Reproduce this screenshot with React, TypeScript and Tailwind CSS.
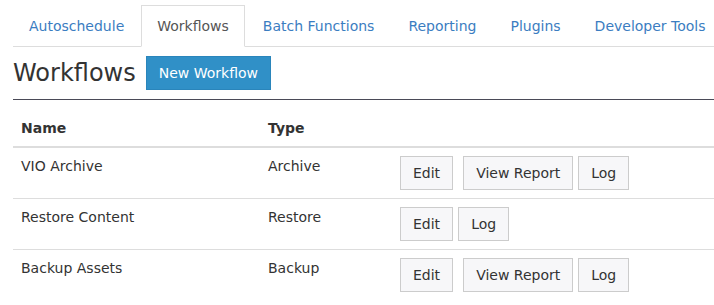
import React from "react";

type Workflow = {
  name: string;
  type: string;
  report: boolean;
};

const tabs = ["Autoschedule", "Workflows", "Batch Functions", "Reporting", "Plugins", "Developer Tools"];

const workflows: Workflow[] = [
  { name: "VIO Archive", type: "Archive", report: true },
  { name: "Restore Content", type: "Restore", report: false },
  { name: "Backup Assets", type: "Backup", report: true },
];

const btn =
  "border border-[#ccc] bg-[#f7f7f9] px-[12px] py-[6px] text-[14px] leading-[20px] text-[#333]";

export default function App() {
  return (
    <div
      className="min-h-[305px] w-[714px] overflow-hidden bg-white pl-[13px] pt-[5px] text-[14px] leading-[20px] text-[#333]"
      style={{ fontFamily: '"DejaVu Sans", Verdana, sans-serif' }}
    >
      <ul className="flex w-[720px] border-b border-[#ddd]">
        {tabs.map((t, i) => {
          const active = t === "Workflows";
          return (
            <li key={t} className={`-mb-px whitespace-nowrap ${i === 0 ? "mr-[1px]" : "mr-[2px]"}`}>
              <a
                className={`block border px-[15px] py-[10px] ${
                  active
                    ? "border-[#ddd] border-b-white bg-white text-[#555]"
                    : "border-transparent text-[#3b7dc1]"
                }`}
              >
                {t}
              </a>
            </li>
          );
        })}
      </ul>

      <div className="flex items-center border-b border-[#4a4a57] pb-[9px] pt-[9px]">
        <h2 className="text-[24px] leading-[34px] text-[#333]">Workflows</h2>
        <button className="ml-[10px] border border-[#2a85bb] bg-[#3090c7] px-[12px] py-[6px] text-[14px] leading-[20px] text-white">
          New Workflow
        </button>
      </div>

      <table className="mt-[10px] w-[720px] border-collapse text-left">
        <thead>
          <tr className="border-b-2 border-[#ddd]">
            <th className="w-[247px] px-[8px] py-[8px] align-bottom font-bold">Name</th>
            <th className="w-[132px] px-[8px] py-[8px] align-bottom font-bold">Type</th>
            <th className="px-[8px] py-[8px]"></th>
          </tr>
        </thead>
        <tbody>
          {workflows.map((w, i) => (
            <tr key={w.name} className={i > 0 ? "border-t border-[#ddd]" : ""}>
              <td className="px-[8px] py-[8px] align-top">{w.name}</td>
              <td className="px-[8px] py-[8px] align-top">{w.type}</td>
              <td className="px-[8px] py-[8px] align-top">
                <div className="flex">
                  <button className={btn}>Edit</button>
                  {w.report && <button className={`${btn} ml-[10px]`}>View Report</button>}
                  <button className={`${btn} ml-[5px]`}>Log</button>
                </div>
              </td>
            </tr>
          ))}
        </tbody>
      </table>
    </div>
  );
}
